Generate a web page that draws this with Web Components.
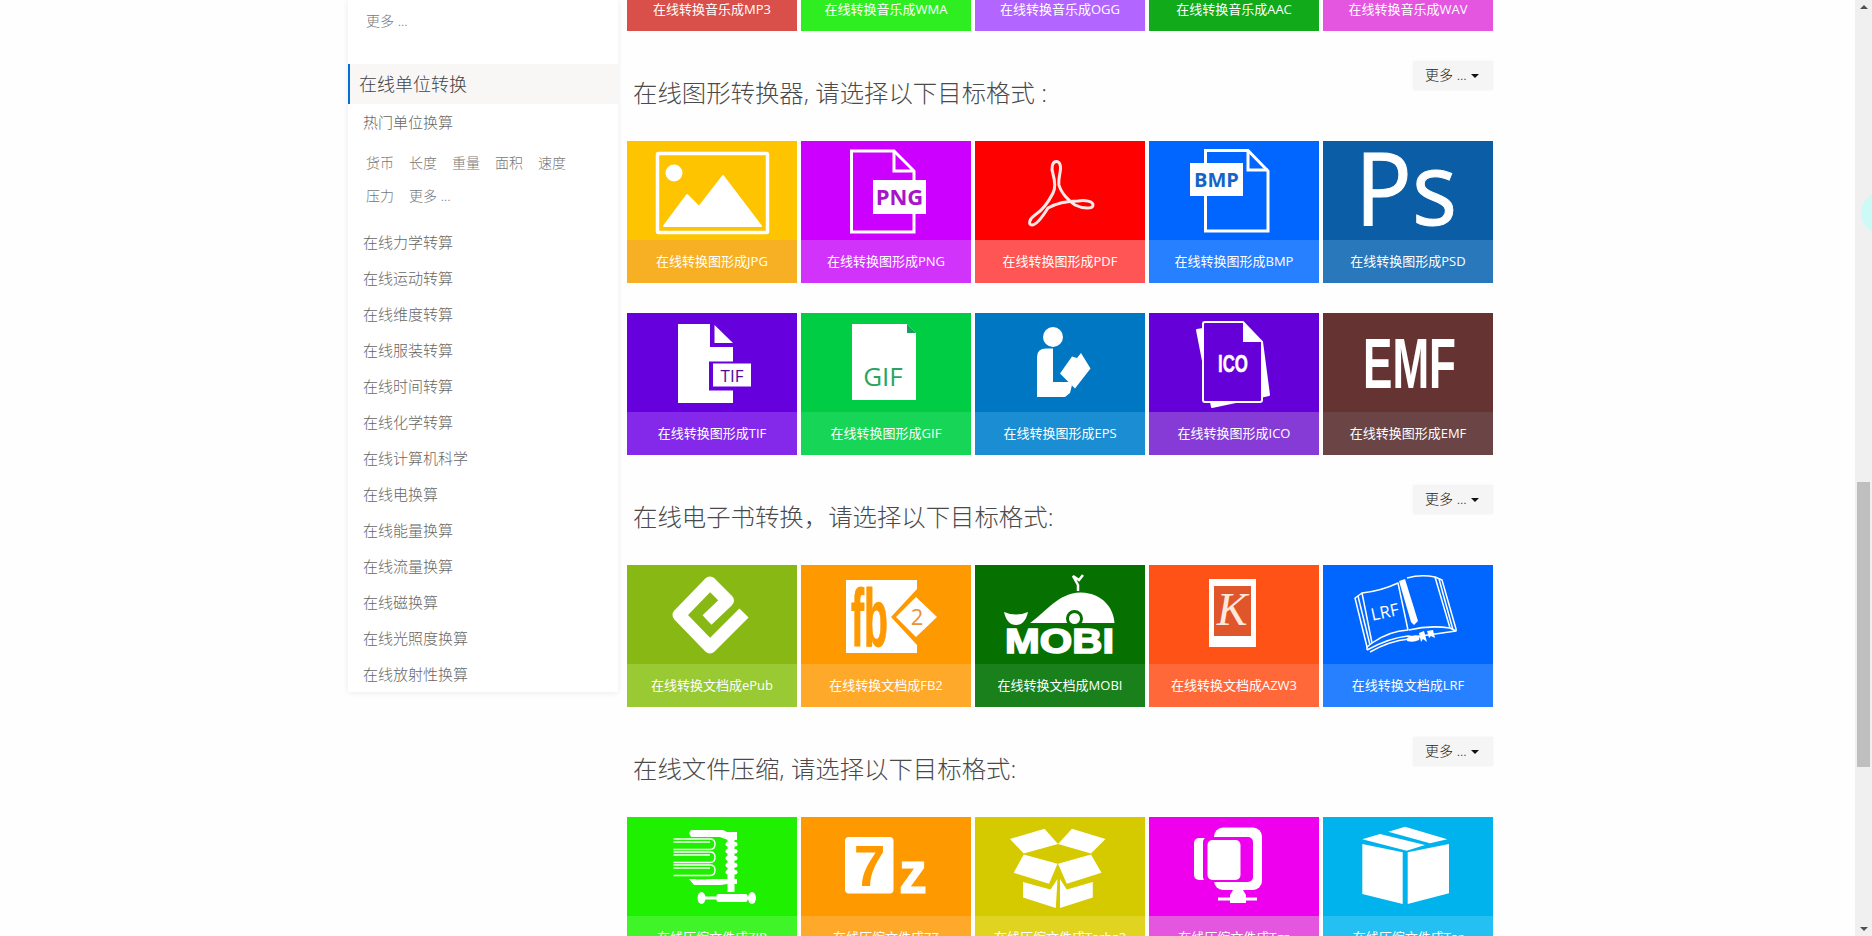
<!DOCTYPE html>
<html lang="zh">
<head>
<meta charset="utf-8">
<title>在线转换</title>
<style>
	html, body { margin: 0; padding: 0; overflow: hidden; background: #fefefe; }
</style>
</head>
<body>
<cv-page>
	<cv-sidebar slot="side">
		<cv-tags top><cv-tag>更多 ...</cv-tag></cv-tags>
		<cv-side-head>在线单位转换</cv-side-head>
		<cv-side-link>热门单位换算</cv-side-link>
		<cv-tags>
			<cv-tag>货币</cv-tag><cv-tag>长度</cv-tag><cv-tag>重量</cv-tag><cv-tag>面积</cv-tag><cv-tag>速度</cv-tag>
			<cv-tag>压力</cv-tag><cv-tag>更多 ...</cv-tag>
		</cv-tags>
		<cv-side-link>在线力学转算</cv-side-link>
		<cv-side-link>在线运动转算</cv-side-link>
		<cv-side-link>在线维度转算</cv-side-link>
		<cv-side-link>在线服装转算</cv-side-link>
		<cv-side-link>在线时间转算</cv-side-link>
		<cv-side-link>在线化学转算</cv-side-link>
		<cv-side-link>在线计算机科学</cv-side-link>
		<cv-side-link>在线电换算</cv-side-link>
		<cv-side-link>在线能量换算</cv-side-link>
		<cv-side-link>在线流量换算</cv-side-link>
		<cv-side-link>在线磁换算</cv-side-link>
		<cv-side-link>在线光照度换算</cv-side-link>
		<cv-side-link>在线放射性换算</cv-side-link>
	</cv-sidebar>

	<cv-main slot="main">
		<cv-grid>
			<cv-card cut bar="#d94f4a">在线转换音乐成MP3</cv-card>
			<cv-card cut bar="#2eee22">在线转换音乐成WMA</cv-card>
			<cv-card cut bar="#b266ff">在线转换音乐成OGG</cv-card>
			<cv-card cut bar="#11aa1b">在线转换音乐成AAC</cv-card>
			<cv-card cut bar="#e455e0">在线转换音乐成WAV</cv-card>
		</cv-grid>

		<cv-head>在线图形转换器, 请选择以下目标格式 :</cv-head>
		<cv-grid>
			<cv-card bg="#ffc400" bar="#f7b023">
				<svg slot="icon" viewBox="0 0 170 99" width="170" height="99">
					<rect x="30.5" y="12.5" width="110" height="79" fill="none" stroke="#fff" stroke-width="3.5" rx="1"/>
					<circle cx="47" cy="32" r="8.5" fill="#fff"/>
					<path d="M37 85 L60 54 L72 66 L96 35 L134 85Z" fill="#fff" stroke="#fff" stroke-linejoin="round" stroke-width="2"/>
				</svg>
				<span slot="caption">在线转换图形成JPG</span>
			</cv-card>
			<cv-card bg="#cc00ff" bar="#d233fa">
				<svg slot="icon" viewBox="0 0 170 99" width="170" height="99">
					<path d="M50.5 10 H93 L113 30 V91 H50.5Z" fill="none" stroke="#fff" stroke-width="3"/>
					<path d="M93 10 V30 H113" fill="none" stroke="#fff" stroke-width="3"/>
					<rect x="72" y="39" width="53" height="34" fill="#fff"/>
					<text x="98.5" y="64" text-anchor="middle" font-family="Open Sans" font-weight="700" font-size="22" fill="#a815c9">PNG</text>
				</svg>
				<span slot="caption">在线转换图形成PNG</span>
			</cv-card>
			<cv-card bg="#ff0000" bar="#ff5555">
				<svg slot="icon" viewBox="0 0 170 99" width="170" height="99">
					<path d="M81.6 20.5 C77 20.5 76 27 78 33 C80 40 81 46 78 52 C74 60 68 69 60 74 C54 78 53 84 57 84 C62 84 68 75 73 67 C80 63 92 60 103 60 C110 59 118 60 118 64 C118 68 108 68 100 64 C94 60 86 52 84 44 C83 38 86 30 85.5 26 C85 22 84 20.5 81.6 20.5Z" fill="none" stroke="#ffe8e8" stroke-width="3" stroke-linejoin="round"/>
				</svg>
				<span slot="caption">在线转换图形成PDF</span>
			</cv-card>
			<cv-card bg="#0066ff" bar="#2680ff">
				<svg slot="icon" viewBox="0 0 170 99" width="170" height="99">
					<path d="M56.5 9.5 H99 L119 30 V90 H56.5Z" fill="none" stroke="#fff" stroke-width="3"/>
					<path d="M99 9.5 V29 H119" fill="none" stroke="#fff" stroke-width="3"/>
					<rect x="41" y="22" width="53" height="33" fill="#fff"/>
					<text x="67.5" y="46" text-anchor="middle" font-family="Open Sans" font-weight="700" font-size="20" fill="#1565c8">BMP</text>
				</svg>
				<span slot="caption">在线转换图形成BMP</span>
			</cv-card>
			<cv-card bg="#0b5ea5" bar="#2878bb">
				<svg slot="icon" viewBox="0 0 170 99" width="170" height="99">
					<text x="32" y="84" font-family="Open Sans" font-weight="400" font-size="100" fill="#fff" stroke="#fff" stroke-width="1" textLength="102" lengthAdjust="spacingAndGlyphs">Ps</text>
				</svg>
				<span slot="caption">在线转换图形成PSD</span>
			</cv-card>
		</cv-grid>
		<cv-spacer></cv-spacer>
		<cv-grid>
			<cv-card bg="#6600dd" bar="#8429ea">
				<svg slot="icon" viewBox="0 0 170 99" width="170" height="99">
					<path d="M51 11 H83 V34 H106 V90 H51Z" fill="#fff"/>
					<path d="M87.5 12 L106 30 H87.5Z" fill="#fff"/>
					<rect x="82" y="48.5" width="42" height="29" fill="#6600dd"/>
					<rect x="86" y="50.5" width="38" height="23" fill="#fff"/>
					<text x="105" y="69" text-anchor="middle" font-family="Open Sans" font-weight="400" font-size="17" fill="#4d0a9e">TIF</text>
				</svg>
				<span slot="caption">在线转换图形成TIF</span>
			</cv-card>
			<cv-card bg="#00cc44" bar="#16d557">
				<svg slot="icon" viewBox="0 0 170 99" width="170" height="99">
					<path d="M51 11 H106 L115 20 V87 H51Z" fill="#fff"/>
					<path d="M106 11 L115 20 H106Z" fill="#19a05a"/>
					<text x="82" y="72.5" text-anchor="middle" font-family="Open Sans" font-weight="400" font-size="26" fill="#2aa55f">GIF</text>
				</svg>
				<span slot="caption">在线转换图形成GIF</span>
			</cv-card>
			<cv-card bg="#0077c2" bar="#1b8dd3">
				<svg slot="icon" viewBox="0 0 170 99" width="170" height="99">
					<circle cx="78" cy="24" r="10" fill="#fff"/>
					<path d="M62 44 Q62 35.5 71 35.5 H78 V69 H94 L97 72 L95 80 L90 84 H62Z" fill="#fff"/>
					<path d="M85 60.5 L97 43.5 L102 45 L106 40 L115.5 55.5 L100 75.5Z" fill="#fff"/>
				</svg>
				<span slot="caption">在线转换图形成EPS</span>
			</cv-card>
			<cv-card bg="#6600d8" bar="#873bd6">
				<svg slot="icon" viewBox="0 0 170 99" width="170" height="99">
					<path d="M48 17 L90 10 L113 29 L120 82 L63 94Z" fill="#fff" stroke="#fff" stroke-linejoin="round" stroke-width="2"/>
					<path d="M56 9 H94 L113 29 V87 Q113 89 111 89 H56 Q54 89 54 87 V11 Q54 9 56 9Z" fill="#6600d8" stroke="#fff" stroke-width="2"/>
					<path d="M94 9 L113.5 29 H94Z" fill="#fff"/>
					<text x="69" y="59" font-family="Liberation Sans" font-weight="700" font-size="24" fill="#fff" stroke="#fff" stroke-width=".5" textLength="30" lengthAdjust="spacingAndGlyphs">ICO</text>
				</svg>
				<span slot="caption">在线转换图形成ICO</span>
			</cv-card>
			<cv-card bg="#663333" bar="#6b4545">
				<svg slot="icon" viewBox="0 0 170 99" width="170" height="99">
					<text x="40" y="75" font-family="Liberation Sans" font-weight="700" font-size="71" fill="#fff" textLength="93" lengthAdjust="spacingAndGlyphs">EMF</text>
				</svg>
				<span slot="caption">在线转换图形成EMF</span>
			</cv-card>
		</cv-grid>

		<cv-head>在线电子书转换，请选择以下目标格式:</cv-head>
		<cv-grid>
			<cv-card bg="#88b814" bar="#99c933">
				<svg slot="icon" viewBox="0 0 170 99" width="170" height="99">
					<path d="M117 48 L83 82 L52 50 L83 18 L100.5 35.5 L80 55" fill="none" stroke="#fff" stroke-width="13" stroke-linejoin="round"/>
				</svg>
				<span slot="caption">在线转换文档成ePub</span>
			</cv-card>
			<cv-card bg="#ff9900" bar="#ffa92b">
				<svg slot="icon" viewBox="0 0 170 99" width="170" height="99">
					<path d="M45 15 H116 V24 L90 52 L116 80 V88 H45Z" fill="#fff"/>
					<path d="M95 52 L115 32 L136 52 L115 72Z" fill="#fff"/>
					<text x="50" y="81" font-family="Liberation Sans" font-weight="700" font-size="82" fill="#f90" stroke="#f90" stroke-width="1" textLength="37" lengthAdjust="spacingAndGlyphs">fb</text>
					<text x="116" y="60" text-anchor="middle" font-family="Open Sans" font-weight="400" font-size="22" fill="#e8923a">2</text>
				</svg>
				<span slot="caption">在线转换文档成FB2</span>
			</cv-card>
			<cv-card bg="#067000" bar="#1a801c">
				<svg slot="icon" viewBox="0 0 170 99" width="170" height="99">
					<path d="M55 58 C70 48 84 27 106 27.5 C128 28 139 44 139.5 58Z" fill="#fff"/>
					<circle cx="99.5" cy="53.5" r="7" fill="#fff" stroke="#067000" stroke-width="3"/>
					<path d="M29 47 Q41 52 53 47 Q50 60 41 60 Q32 60 29 47Z" fill="#fff"/>
					<path d="M103 26 V20 L98 11 L104 15 L108 10" fill="none" stroke="#fff" stroke-width="2.5"/>
					<text x="30" y="88" font-family="Liberation Sans" font-weight="700" font-size="35" fill="#fff" stroke="#fff" stroke-width="1.6" textLength="109" lengthAdjust="spacingAndGlyphs">MOBI</text>
				</svg>
				<span slot="caption">在线转换文档成MOBI</span>
			</cv-card>
			<cv-card bg="#ff5216" bar="#ff693a">
				<svg slot="icon" viewBox="0 0 170 99" width="170" height="99">
					<rect x="60" y="14" width="47" height="68" fill="#fff"/>
					<rect x="65" y="21" width="37" height="50" fill="#e0552a"/>
					<text x="83" y="60" text-anchor="middle" font-family="Liberation Serif" font-style="italic" font-weight="400" font-size="46" fill="#fde8dc">K</text>
				</svg>
				<span slot="caption">在线转换文档成AZW3</span>
			</cv-card>
			<cv-card bg="#0066ff" bar="#2680ff">
				<svg slot="icon" viewBox="0 0 170 99" width="170" height="99">
					<g fill="none" stroke="#fff" stroke-width="1.5" stroke-linejoin="round">
						<path d="M39 28 Q58 26 75 18 L85 65 Q66 66 49 78Z"/>
						<path d="M84 13 Q98 9 112 12 L127 63 Q106 60 86 65"/>
						<path d="M39 28 L32 33 L44 82 L49 78"/>
						<path d="M35 31 L47 80"/>
						<path d="M44 85 Q66 73 85 71 L91 72 L133 66 L127 63"/>
						<path d="M44 82 L44 85 M112 12 L119 15 L133 64 L133 66 M116 14 L130 65"/>
						<path d="M47 87 Q66 76 86 74"/>
					</g>
					<path d="M76 16 L82 14 L95 56 L91 60 L88 57Z" fill="#fff"/>
					<path d="M84 73 Q90 69 97 71 L96 75 Q90 78 84 76Z" fill="#fff"/>
					<path d="M96 68 L101 66 L104 77 L100 74 L98 77Z M104 66 L110 65 L112 73 L108 71 L106 73Z" fill="#fff"/>
					<text x="62" y="53" text-anchor="middle" transform="rotate(-12 62 48)" font-family="Open Sans" font-weight="400" font-size="17" fill="#fff">LRF</text>
				</svg>
				<span slot="caption">在线转换文档成LRF</span>
			</cv-card>
		</cv-grid>

		<cv-head>在线文件压缩, 请选择以下目标格式:</cv-head>
		<cv-grid>
			<cv-card bg="#1ff000" bar="#3ff528">
				<svg slot="icon" viewBox="0 0 170 99" width="170" height="99">
					<path d="M64 13 H96 L100 15 H110 V23 H101 L93 20 H64 L62 16Z" fill="#fff"/>
					<rect x="100.5" y="17" width="7" height="58" fill="#fff"/>
					<g fill="#fff">
						<rect x="98.5" y="25" width="12" height="4.5" rx="2.2"/><rect x="98.5" y="32" width="12" height="4.5" rx="2.2"/>
						<rect x="98.5" y="39" width="12" height="4.5" rx="2.2"/><rect x="98.5" y="46" width="12" height="4.5" rx="2.2"/>
						<rect x="98.5" y="53" width="12" height="4.5" rx="2.2"/>
					</g>
					<path d="M62 62 H68 Q70 63 84 62 H110 V67 H100 L94 68 H67Z" fill="#fff"/>
					<g fill="none" stroke="#fff" stroke-width="1.4">
						<path d="M46.5 22 H83 Q88 22 88 27 Q88 32.5 83 32.5 H46.5 M46.5 25 H83"/>
						<path d="M46.5 35 H83 Q88 35 88 40 Q88 45.5 83 45.5 H46.5 M46.5 38 H83"/>
						<path d="M46.5 48 H83 Q88 48 88 53 Q88 58.5 83 58.5 H46.5 M46.5 51 H83"/>
					</g>
					<rect x="89.5" y="77" width="31" height="8" rx="2" fill="#fff"/>
					<rect x="72" y="79.5" width="52" height="3" fill="#fff"/>
					<ellipse cx="74.5" cy="81" rx="4" ry="6" fill="#fff"/><ellipse cx="125" cy="81" rx="4" ry="6" fill="#fff"/>
				</svg>
				<span slot="caption">在线压缩文件成ZIP</span>
			</cv-card>
			<cv-card bg="#ff9900" bar="#ffa92b">
				<svg slot="icon" viewBox="0 0 170 99" width="170" height="99">
					<rect x="44" y="20" width="48.5" height="56.5" rx="4" fill="#fff"/>
					<text x="68.5" y="69" text-anchor="middle" font-family="Liberation Sans" font-weight="700" font-size="57" fill="#f90">7</text>
					<text x="98" y="75.5" font-family="Liberation Sans" font-weight="700" font-size="60" fill="#fff" stroke="#fff" textLength="28" lengthAdjust="spacingAndGlyphs">z</text>
				</svg>
				<span slot="caption">在线压缩文件成7Z</span>
			</cv-card>
			<cv-card bg="#d5c900" bar="#e1d420">
				<svg slot="icon" viewBox="0 0 170 99" width="170" height="99">
					<g fill="#fff">
						<path d="M35 22 L69.5 11.7 L83 27 L48.7 36.5Z"/>
						<path d="M83 27 L97 11.7 L130.5 22 L116 36.5Z"/>
						<path d="M48.7 37.5 L82.5 46.8 L74 66.8 L38.7 55.8Z"/>
						<path d="M116 37.5 L83 46.8 L91.8 66.8 L126.5 55.8Z"/>
						<path d="M48 65 L75.5 72.6 L82.5 62 L80.8 90.9 L48 80.6Z"/>
						<path d="M85 62 L91.8 72.6 L117.8 65 V80.6 L85 90.9Z"/>
					</g>
				</svg>
				<span slot="caption">在线压缩文件成Tarbz2</span>
			</cv-card>
			<cv-card bg="#ee00ee" bar="#e455e0">
				<svg slot="icon" viewBox="0 0 170 99" width="170" height="99">
					<rect x="65" y="10.5" width="48" height="62.5" rx="9" fill="#fff"/>
					<rect x="45" y="21" width="22" height="42" rx="5" fill="#fff"/>
					<rect x="54" y="20" width="50" height="45" rx="5" fill="#ee00ee"/>
					<rect x="58.5" y="23" width="33" height="40" rx="5" fill="#fff"/>
					<path d="M84 73 H94 L97 78 V86 H81 V78Z" fill="#fff"/>
					<rect x="69" y="80.5" width="39" height="3" fill="#fff"/>
				</svg>
				<span slot="caption">在线压缩文件成Tgz</span>
			</cv-card>
			<cv-card bg="#00b3ec" bar="#24c0f2">
				<svg slot="icon" viewBox="0 0 170 99" width="170" height="99">
					<g fill="#fff">
						<path d="M39.3 27 L79.7 35.3 V87 L39.3 77Z"/>
						<path d="M84.7 35.3 L126 27 V76.3 L84.7 87Z"/>
						<path d="M39.3 22.3 L57 17 L102 28 L83.7 33.7Z"/>
						<path d="M65.3 14.7 L82 9.7 L124.3 22.3 L107 26.3Z"/>
					</g>
				</svg>
				<span slot="caption">在线压缩文件成Tar</span>
			</cv-card>
		</cv-grid>
	</cv-main>

	<cv-scrollbar slot="bar"></cv-scrollbar>
	<cv-bubble slot="float"></cv-bubble>
</cv-page>

<script>
const FONT = `"Open Sans", "Noto Sans CJK SC", sans-serif`;

// base class, every element just sets its markup once
class CvBase extends HTMLElement {
	constructor() {
		super();
		this.shadow = this.attachShadow({mode: "open"});
	}

	connectedCallback() {
		this.shadow.innerHTML = this.markup();
	}
}

// whole window: content on the left, fake scrollbar on the right
class CvPage extends CvBase {
	markup() {
		return `
			<style>
				:host {
					display: flex;
					position: relative;
					width: 1872px;
					height: 936px;
					overflow: hidden;
					font-family: ${FONT};
					font-weight: 300;
				}
				.content {
					flex: 1;
					height: 936px;
					overflow: hidden;
					display: flex;
					align-items: flex-start;
					gap: 9px;
					padding-left: 348px;
				}
			</style>
			<div class="content">
				<slot name="side"></slot>
				<slot name="main"></slot>
			</div>
			<slot name="bar"></slot>
			<slot name="float"></slot>
		`;
	}
}

class CvSidebar extends CvBase {
	markup() {
		return `
			<style>
				:host {
					display: block;
					flex: none;
					width: 270px;
					background: #fff;
					box-shadow: 0 1px 6px rgba(0, 0, 0, .08);
				}
			</style>
			<slot></slot>
		`;
	}
}

class CvSideHead extends CvBase {
	markup() {
		return `
			<style>
				:host {
					display: block;
					height: 40px;
					line-height: 40px;
					padding-left: 9px;
					border-left: 2px solid #0070d8;
					background: #f9f7f6;
					font-size: 18px;
					color: #444;
				}
			</style>
			<slot></slot>
		`;
	}
}

class CvSideLink extends CvBase {
	markup() {
		return `
			<style>
				:host {
					display: block;
					height: 36px;
					line-height: 36px;
					padding-left: 15px;
					font-size: 15px;
					color: #666;
				}
			</style>
			<slot></slot>
		`;
	}
}

class CvTags extends CvBase {
	markup() {
		return `
			<style>
				:host {
					display: flex;
					flex-wrap: wrap;
					column-gap: 15px;
					padding: 6px 40px 12px 18px;
				}
				:host([top]) {
					height: 40px;
					padding: 0 0 0 18px;
					margin-bottom: 24px;
					align-items: center;
				}
			</style>
			<slot></slot>
		`;
	}
}

class CvTag extends CvBase {
	markup() {
		return `
			<style>
				:host {
					display: block;
					line-height: 33px;
					font-size: 14px;
					color: #777;
				}
			</style>
			<slot></slot>
		`;
	}
}

class CvMain extends CvBase {
	markup() {
		return `
			<style>
				:host {
					display: block;
					flex: none;
					width: 866px;
				}
			</style>
			<slot></slot>
		`;
	}
}

class CvGrid extends CvBase {
	markup() {
		return `
			<style>
				:host {
					display: grid;
					grid-template-columns: repeat(5, 170px);
					column-gap: 4px;
				}
			</style>
			<slot></slot>
		`;
	}
}

class CvSpacer extends CvBase {
	markup() {
		return `<style>:host { display: block; height: 30px; }</style>`;
	}
}

// a section title with the "more" button across from it
class CvHead extends CvBase {
	markup() {
		return `
			<style>
				:host {
					display: flex;
					justify-content: space-between;
					align-items: flex-start;
					height: 110px;
				}
				h2 {
					margin: 42px 0 0 6px;
					font-size: 24.4px;
					line-height: 40px;
					font-weight: 300;
					color: #4a4a4a;
				}
				.more {
					display: flex;
					align-items: center;
					box-sizing: border-box;
					width: 80px;
					height: 29px;
					margin-top: 30px;
					padding: 0 0 3px 12px;
					background: #f5f5f5;
					box-shadow: 0 0 2px rgba(0, 0, 0, .06);
					font-size: 14px;
					color: #222;
				}
				.caret {
					width: 0;
					height: 0;
					margin: 3px 0 0 4px;
					border: 4px solid transparent;
					border-top-color: #111;
					border-bottom: 0;
				}
			</style>
			<h2><slot></slot></h2>
			<div class="more">更多 ...<span class="caret"></span></div>
		`;
	}
}

class CvCard extends CvBase {
	markup() {
		let bg = this.getAttribute("bg") || "transparent";
		let bar = this.getAttribute("bar") || "#888";
		return `
			<style>
				:host {
					display: block;
					width: 170px;
				}
				.icon {
					height: 99px;
					background: ${bg};
				}
				.cap {
					box-sizing: border-box;
					height: 43px;
					padding-bottom: 2px;
					display: flex;
					align-items: center;
					justify-content: center;
					background: ${bar};
					color: #fff;
					font-size: 13px;
					font-weight: 400;
				}
				::slotted(svg) {
					display: block;
				}
				:host([cut]) .icon {
					display: none;
				}
				:host([cut]) .cap {
					height: 31px;
					padding: 0;
					line-height: 18px;
					align-items: flex-start;
				}
			</style>
			<div class="icon"><slot name="icon"></slot></div>
			<div class="cap"><slot name="caption"></slot><slot></slot></div>
		`;
	}
}

class CvScrollbar extends CvBase {
	markup() {
		return `
			<style>
				:host {
					display: block;
					position: relative;
					flex: none;
					width: 17px;
					height: 936px;
					background: #f0f0f0;
				}
				.thumb {
					position: absolute;
					left: 2px;
					top: 482px;
					width: 13px;
					height: 285px;
					background: #bfbfbf;
				}
				.up, .down {
					position: absolute;
					left: 5px;
					width: 0;
					height: 0;
					border: 4px solid transparent;
				}
				.up { top: 5px; border-top: 0; border-bottom-color: #505050; }
				.down { bottom: 5px; border-bottom: 0; border-top-color: #505050; }
			</style>
			<div class="up"></div>
			<div class="thumb"></div>
			<div class="down"></div>
		`;
	}
}

// the pale floating disc that pokes in over the scrollbar
class CvBubble extends CvBase {
	markup() {
		return `
			<style>
				:host {
					position: absolute;
					left: 1861px;
					top: 192px;
					width: 42px;
					height: 42px;
					border-radius: 50%;
					background: #ccfaf6;
				}
			</style>
		`;
	}
}

customElements.define("cv-page", CvPage);
customElements.define("cv-sidebar", CvSidebar);
customElements.define("cv-side-head", CvSideHead);
customElements.define("cv-side-link", CvSideLink);
customElements.define("cv-tags", CvTags);
customElements.define("cv-tag", CvTag);
customElements.define("cv-main", CvMain);
customElements.define("cv-grid", CvGrid);
customElements.define("cv-spacer", CvSpacer);
customElements.define("cv-head", CvHead);
customElements.define("cv-card", CvCard);
customElements.define("cv-scrollbar", CvScrollbar);
customElements.define("cv-bubble", CvBubble);
</script>
</body>
</html>
